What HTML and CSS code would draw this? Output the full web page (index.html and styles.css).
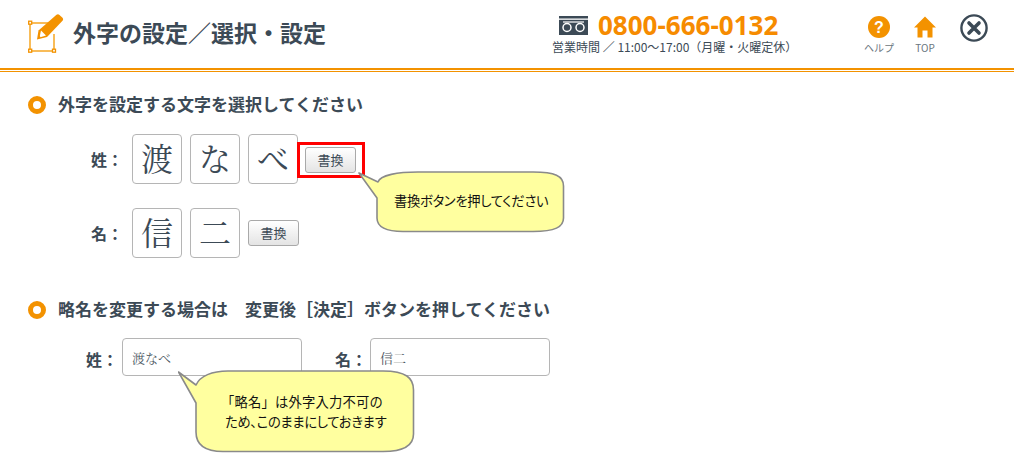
FILE: index.html
```html
<!DOCTYPE html>
<html lang="ja">
<head>
    <meta charset="UTF-8">
    <meta name="viewport" content="width=device-width, initial-scale=1.0">
    <title>外字の設定</title>
    <link rel="stylesheet" href="styles.css">
</head>
<body>
    <header class="header">
        <svg class="title-icon" width="36" height="39" viewBox="0 0 36 39">
            <path d="M2 9H21M26 20V37H2V9" fill="none" stroke="#f6a623" stroke-width="1.500"/>
            <g fill="#fff" stroke="#f39200" stroke-width="1.300">
                <rect x="0.700" y="7.200" width="3" height="3"/>
                <rect x="0.700" y="35.200" width="3" height="3"/>
                <rect x="24.500" y="35.200" width="3" height="3"/>
            </g>
            <path d="M28.500 0.800 Q30 -0.300 31.500 1 L34.500 3.800 Q35.700 5.300 34.500 6.800 L19 23 L9 25.500 L10.500 16.500 Z" fill="#f39200"/>
            <path d="M13 16.500 L18 21.500 L11.500 23.500 Z" fill="#fff"/>
            <path d="M11 21.500 L13 23.500 L10 24.500 Z" fill="#f39200"/>
        </svg>
        <h1 class="title">外字の設定／選択・設定</h1>
        <div class="contact">
            <div class="phone">
                <svg width="29" height="19" viewBox="0 0 29 19">
                    <rect width="29" height="19" fill="#3c4a56"/>
                    <rect width="29" height="1.300" y="2.500" fill="#fff"/>
                    <path d="M4 6H25" stroke="#fff" stroke-width="1.200"/>
                    <circle cx="8" cy="11.500" r="4" fill="none" stroke="#fff" stroke-width="1.500"/>
                    <circle cx="21" cy="11.500" r="4" fill="none" stroke="#fff" stroke-width="1.500"/>
                </svg>
                <span class="phone-number">0800-666-0132</span>
            </div>
            <div class="hours">営業時間 ／ 11:00～17:00（月曜・火曜定休）</div>
        </div>
        <div class="nav">
            <a class="nav-item nav-help">
                <svg width="22" height="22" viewBox="0 0 22 22">
                    <circle cx="11" cy="11" r="11" fill="#f39200"/>
                    <text x="11" y="16.500" class="help-mark" text-anchor="middle">?</text>
                </svg>
                <span>ヘルプ</span>
            </a>
            <a class="nav-item nav-top">
                <svg width="22" height="22" viewBox="0 0 22 22">
                    <path d="M11 0.500L22 11.500H18.500V21.500H13.500V14.500H8.500V21.500H3.500V11.500H0Z" fill="#f39200"/>
                </svg>
                <span>TOP</span>
            </a>
            <a class="close-btn">
                <svg width="28" height="28" viewBox="0 0 28 28">
                    <circle cx="14" cy="14" r="12.600" fill="#fff" stroke="#3c4a56" stroke-width="2.400"/>
                    <path d="M9 9L19 19M19 9L9 19" stroke="#3c4a56" stroke-width="3.600" stroke-linecap="round"/>
                </svg>
            </a>
        </div>
    </header>

    <main class="content">
        <section class="section section-select">
            <h2 class="heading">外字を設定する文字を選択してください</h2>
            <div class="char-row">
                <span class="label">姓：</span>
                <div class="chars">
                    <span class="char">渡</span>
                    <span class="char">な</span>
                    <span class="char">べ</span>
                </div>
                <div class="highlight"><button class="swap">書換</button></div>
            </div>
            <div class="char-row">
                <span class="label">名：</span>
                <div class="chars">
                    <span class="char">信</span>
                    <span class="char">二</span>
                </div>
                <button class="swap">書換</button>
            </div>
        </section>

        <section class="section section-short">
            <h2 class="heading">略名を変更する場合は　変更後［決定］ボタンを押してください</h2>
            <div class="short-row">
                <span class="label">姓：</span>
                <input class="short-input" type="text" value="渡なべ">
                <span class="label label-second">名：</span>
                <input class="short-input" type="text" value="信二">
            </div>
        </section>
    </main>

    <div class="balloon balloon-swap">
        <svg width="208" height="62" viewBox="0 0 208 62">
            <path d="M1 2 L20 11 C22 4 40 1 60 1 H175 C197 1 205.500 5 205.500 15 V47 C205.500 56 197 60.500 175 60.500 H45 C28 60.500 19 56 19 47 V27 Z" fill="#ffff9f" stroke="#8a8a8a" stroke-width="1.600" stroke-linejoin="round"/>
        </svg>
        <p class="balloon-text line-tight">書換ボタンを押してください</p>
    </div>
    <div class="balloon balloon-short">
        <svg width="238" height="83" viewBox="0 0 238 83">
            <path d="M0.500 2 L18 15 C22 6 34 1 50 1 H205 C228 1 235.500 8 235.500 20 V64 C235.500 76 225 81.500 205 81.500 H45 C28 81.500 18 76 18 62 V33 Z" fill="#ffff9f" stroke="#8a8a8a" stroke-width="1.600" stroke-linejoin="round"/>
        </svg>
        <p class="balloon-text"><span class="line-wide">「略名」は外字入力不可の</span><br><span class="line-tight">ため、このままにしておきます</span></p>
    </div>
</body>
</html>
```

FILE: styles.css
```css
body {
    margin: 0;
    height: 475px;
    overflow: hidden;
    position: relative;
    background: #fff;
    color: #3c4a56;
    font-family: "Noto Sans CJK JP", "Noto Sans", sans-serif;
}

/* header */
.header {
    display: flex;
    align-items: flex-start;
    height: 68px;
    padding-left: 28px;
    border-bottom: 2px solid #f39200;
    position: relative;
}

.header::after {
    content: "";
    position: absolute;
    left: 0;
    right: 0;
    bottom: -4px;
    height: 1px;
    background: #f39200;
}

.title-icon {
    margin-top: 14px;
    flex: none;
}

.title {
    margin: 15px 0 0 9px;
    font-size: 23px;
    line-height: 34px;
    font-weight: 700;
    width: 255px;
    white-space: nowrap;
}

.contact {
    margin-left: 224px;
    width: 250px;
    flex: none;
}

.phone {
    display: flex;
    align-items: center;
    margin: 10px 0 0 7px;
    height: 30px;
}

.phone-number {
    margin-left: 10px;
    font-family: "Open Sans", "Liberation Sans", sans-serif;
    font-size: 26px;
    font-weight: 700;
    color: #f68b00;
    line-height: 30px;
}

.hours {
    font-size: 12px;
    line-height: 14px;
    white-space: nowrap;
}

.nav {
    display: flex;
    align-items: flex-start;
    margin-left: 57px;
}

.nav-item {
    display: flex;
    flex-direction: column;
    align-items: center;
    width: 40px;
    font-size: 10px;
    line-height: 14px;
    color: #6b7680;
}

.nav-item svg {
    margin-top: 16px;
    margin-bottom: 3px;
}

.nav-top {
    margin-left: 6px;
}

.close-btn {
    margin: 14px 0 0 15px;
}

.help-mark {
    font-family: "Liberation Sans", sans-serif;
    font-size: 16px;
    font-weight: 700;
    fill: #fff;
}

/* sections */
.content {
    padding: 24px 0 0 28px;
}

.heading {
    display: flex;
    align-items: center;
    box-sizing: border-box;
    margin: 0;
    height: 22px;
    padding-bottom: 3px;
    font-size: 17px;
    font-weight: 700;
    white-space: nowrap;
}

.heading::before {
    content: "";
    box-sizing: border-box;
    width: 18px;
    height: 18px;
    margin: 3px 12px 0 0;
    border: 5px solid #f39200;
    border-radius: 50%;
}

.char-row {
    display: flex;
    align-items: center;
    padding-left: 63px;
    height: 50px;
    margin-top: 24px;
}

.section-select .char-row:first-of-type {
    margin-top: 18px;
}

.label {
    width: 41px;
    flex: none;
    font-size: 16px;
    font-weight: 700;
    white-space: nowrap;
}

.chars {
    display: flex;
    gap: 8px;
}

.char {
    box-sizing: border-box;
    display: flex;
    align-items: center;
    justify-content: center;
    width: 50px;
    height: 50px;
    border: 1px solid #b5b5b5;
    border-radius: 4px;
    font-family: "Noto Serif CJK JP", "Noto Sans CJK JP", serif;
    font-size: 32px;
    padding-bottom: 4px;
}

.highlight {
    box-sizing: border-box;
    width: 68px;
    height: 36px;
    margin: 2px 0 0 -1px;
    padding: 2px 0 0 5px;
    border: 3px solid #f00;
}

.char-row > .swap {
    margin-left: 8px;
}

.swap {
    display: block;
    box-sizing: border-box;
    width: 51px;
    height: 26px;
    padding: 0;
    border: 1px solid #a9a9a9;
    border-radius: 3px;
    background: linear-gradient(#fff, #e4e4e4);
    color: #3c4a56;
    font-family: inherit;
    font-size: 13px;
    line-height: 22px;
}

.section-short {
    margin-top: 41px;
}

.short-row {
    display: flex;
    align-items: center;
    margin-top: 17px;
    padding-left: 58px;
}

.short-row .label {
    width: 36px;
    padding-top: 4px;
}

.short-row .label-second {
    width: 35px;
    margin-left: 33px;
}

.short-input {
    box-sizing: border-box;
    width: 180px;
    height: 38px;
    padding: 0 9px;
    border: 1px solid #b5b5b5;
    border-radius: 4px;
    color: #4a5560;
    font-family: "Noto Serif CJK JP", "Noto Sans CJK JP", serif;
    font-size: 13px;
}

/* balloons */
.balloon {
    position: absolute;
}

.balloon svg {
    display: block;
}

.balloon-text {
    position: absolute;
    margin: 0;
    color: #111;
    font-size: 13.300px;
    line-height: 20px;
    white-space: nowrap;
}

.line-tight {
    font-feature-settings: "palt";
    letter-spacing: -0.300px;
}

.line-wide {
    margin-left: -4px;
    letter-spacing: 0.200px;
}

.balloon-swap {
    left: 358px;
    top: 171px;
}

.balloon-swap .balloon-text {
    left: 36px;
    top: 20px;
}

.balloon-short {
    left: 178px;
    top: 370px;
}

.balloon-short .balloon-text {
    left: 47px;
    top: 22px;
}
```
